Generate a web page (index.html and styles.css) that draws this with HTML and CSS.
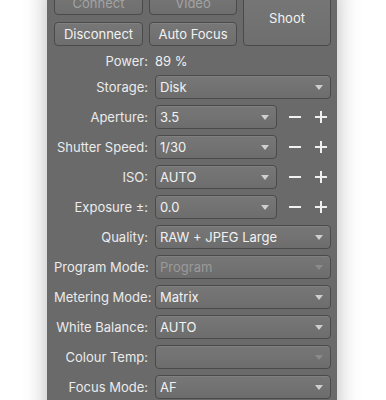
FILE: index.html
```html
<!DOCTYPE html>
<html>
<head>
<meta charset="utf-8">
<link rel="stylesheet" href="styles.css">
</head>
<body>
<div class="panel">
  <div class="buttons">
    <div class="btn disabled">Connect</div>
    <div class="btn disabled">Video</div>
    <div class="btn shoot">Shoot</div>
    <div class="btn">Disconnect</div>
    <div class="btn">Auto Focus</div>
  </div>
  <div class="form">
    <div class="label power">Power:</div>
    <div class="value power">89 %</div>

    <div class="label">Storage:</div>
    <div class="select"><span>Disk</span><i class="arrow"></i></div>

    <div class="label">Aperture:</div>
    <div class="ctl">
      <div class="select"><span>3.5</span><i class="arrow"></i></div>
      <span class="minus"></span><span class="plus"></span>
    </div>

    <div class="label">Shutter Speed:</div>
    <div class="ctl">
      <div class="select"><span>1/30</span><i class="arrow"></i></div>
      <span class="minus"></span><span class="plus"></span>
    </div>

    <div class="label">ISO:</div>
    <div class="ctl">
      <div class="select"><span>AUTO</span><i class="arrow"></i></div>
      <span class="minus"></span><span class="plus"></span>
    </div>

    <div class="label">Exposure ±:</div>
    <div class="ctl">
      <div class="select"><span>0.0</span><i class="arrow"></i></div>
      <span class="minus"></span><span class="plus"></span>
    </div>

    <div class="label">Quality:</div>
    <div class="select"><span>RAW + JPEG Large</span><i class="arrow"></i></div>

    <div class="label">Program Mode:</div>
    <div class="select disabled"><span>Program</span><i class="arrow"></i></div>

    <div class="label">Metering Mode:</div>
    <div class="select"><span>Matrix</span><i class="arrow"></i></div>

    <div class="label">White Balance:</div>
    <div class="select"><span>AUTO</span><i class="arrow"></i></div>

    <div class="label">Colour Temp:</div>
    <div class="select disabled"><span></span><i class="arrow"></i></div>

    <div class="label">Focus Mode:</div>
    <div class="select"><span>AF</span><i class="arrow"></i></div>
  </div>
</div>
</body>
</html>
```

FILE: styles.css
```css
html, body {
  margin: 0;
  padding: 0;
  background: #ffffff;
  overflow: hidden;
}
body {
  font-family: "Inter", "Liberation Sans", sans-serif;
  font-size: 13px;
  color: #ececec;
}
.panel {
  width: 290px;
  margin-left: 47px;
  margin-top: -16px;
  padding: 7px 6px 20px 7px;
  background: #6a6a6a;
  box-shadow: 0 0 22px rgba(0, 0, 0, 0.28);
  box-sizing: border-box;
  height: 440px;
}
.buttons {
  display: grid;
  grid-template-columns: 89px 88px 88px;
  grid-template-rows: 24px 24px;
  column-gap: 6px;
  row-gap: 7px;
}
.btn {
  display: flex;
  align-items: center;
  justify-content: center;
  border: 1px solid #4a4a4a;
  border-radius: 4px;
  background: linear-gradient(#777777, #6e6e6e);
  box-shadow: inset 0 1px 0 rgba(255, 255, 255, 0.08);
  color: #f2f2f2;
  box-sizing: border-box;
}
.btn.disabled {
  color: #a3a3a3;
}
.btn.shoot {
  grid-column: 3;
  grid-row: 1 / span 2;
  padding-bottom: 2px;
}
.form {
  display: grid;
  grid-template-columns: 94px 176px;
  grid-template-rows: 26px;
  grid-auto-rows: 30px;
  column-gap: 7px;
  align-items: center;
}
.power {
  padding-top: 4px;
}
.label {
  text-align: right;
  white-space: nowrap;
  color: #ebebeb;
}
.value {
  color: #f0f0f0;
}
.select {
  position: relative;
  height: 24px;
  box-sizing: border-box;
  border: 1px solid #4a4a4a;
  border-radius: 4px;
  background: linear-gradient(#777777, #6d6d6d);
  box-shadow: inset 0 1px 0 rgba(255, 255, 255, 0.07);
  display: flex;
  align-items: center;
  padding-left: 4px;
  color: #f2f2f2;
}
.select span {
  flex: 1;
}
.select .arrow {
  width: 0;
  height: 0;
  border-left: 4px solid transparent;
  border-right: 4px solid transparent;
  border-top: 5px solid #cfcfcf;
  margin-right: 7px;
}
.select.disabled {
  color: #9a9a9a;
}
.select.disabled .arrow {
  border-top-color: #8a8a8a;
}
.ctl {
  display: flex;
  align-items: center;
}
.ctl .select {
  width: 122px;
  flex: none;
}
.minus, .plus {
  position: relative;
  width: 12px;
  height: 12px;
  flex: none;
}
.minus {
  margin-left: 12px;
}
.plus {
  margin-left: 14px;
}
.minus::before, .plus::before, .plus::after {
  content: "";
  position: absolute;
  background: #f0f0f0;
}
.minus::before, .plus::before {
  left: 0;
  right: 0;
  top: 5px;
  height: 2px;
}
.plus::after {
  top: 0;
  bottom: 0;
  left: 5px;
  width: 2px;
}
```
